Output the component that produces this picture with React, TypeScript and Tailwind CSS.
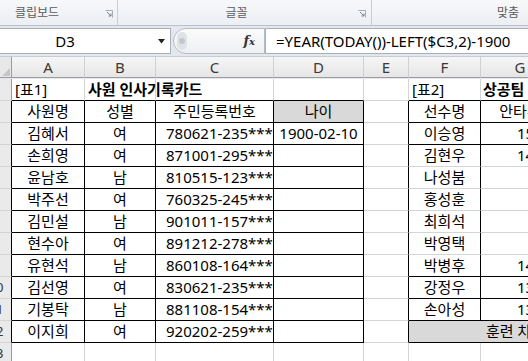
import React from 'react';

const FONT = "font-['Noto_Sans','Noto_Sans_CJK_KR',sans-serif]";

const names = ['김혜서', '손희영', '윤남호', '박주선', '김민설', '현수아', '유현석', '김선영', '기봉탁', '이지희'];
const sexes = ['여', '여', '남', '여', '남', '여', '남', '여', '남', '여'];
const ids = [
  '780621-235****',
  '871001-295****',
  '810515-123****',
  '760325-245****',
  '901011-157****',
  '891212-278****',
  '860108-164****',
  '830621-235****',
  '881108-154****',
  '920202-259****',
];
const players = ['이승영', '김현우', '나성붐', '홍성훈', '최희석', '박영택', '박병후', '강정우', '손아성'];
const hits = ['152', '148', '', '', '', '', '143', '139', '131'];

type CellProps = {
  children?: React.ReactNode;
  align?: 'left' | 'center' | 'right';
  rb?: boolean;
  bb?: boolean;
  fill?: boolean;
  className?: string;
};

function Cell({ children, align = 'center', rb, bb, fill, className = '' }: CellProps) {
  const justify = align === 'left' ? 'justify-start' : align === 'right' ? 'justify-end' : 'justify-center';
  return (
    <div
      className={`flex items-center overflow-hidden whitespace-nowrap border-r border-b text-[15px] text-black ${justify} ${
        rb ? 'border-r-black' : 'border-r-[#d4d4d4]'
      } ${bb ? 'border-b-black' : 'border-b-[#d4d4d4]'} ${fill ? 'bg-[#d9d9d9]' : 'bg-white'} ${className}`}
    >
      {children}
    </div>
  );
}

function RowHead({ n, dark }: { n: number; dark?: boolean }) {
  return (
    <div
      className={`flex justify-end overflow-hidden border-b border-b-[#d4d4d4] border-r bg-[#eaeaea] ${
        dark ? 'border-r-black' : 'border-r-[#9c9c9c]'
      }`}
    >
      <div className="flex w-[30px] shrink-0 items-center justify-center text-[13px] text-[#333]">{n}</div>
    </div>
  );
}

function DialogLauncher({ className = '' }: { className?: string }) {
  return (
    <svg width="8" height="8" viewBox="0 0 8 8" className={className}>
      <path d="M0.5 0.5H7.5V7.5" fill="none" stroke="#a6acb5" strokeWidth="1" />
      <path d="M2 2L6 6M6 3.5V6H3.5" fill="none" stroke="#7d838c" strokeWidth="1" />
    </svg>
  );
}

function Ribbon() {
  return (
    <div className="flex h-[26px] border-b border-b-[#b9c0ca] bg-gradient-to-b from-[#f7f8fa] to-[#eceff3] text-[12px] text-[#5c5c5c]">
      <div className="relative flex w-[118px] items-end border-r border-r-[#c9ced6] pb-[3px] pl-[15px]">
        <span>클립보드</span>
        <DialogLauncher className="absolute right-[4px] bottom-[7px]" />
      </div>
      <div className="relative flex w-[254px] items-end justify-center border-r border-r-[#c9ced6] pb-[3px] pr-[16px]">
        <span>글꼴</span>
        <DialogLauncher className="absolute right-[5px] bottom-[7px]" />
      </div>
      <div className="flex flex-1 items-end justify-end pb-[3px] pr-[9px]">
        <span>맞춤</span>
      </div>
    </div>
  );
}

function FormulaBar() {
  return (
    <div className="flex h-[30px] items-center bg-[#e4e8ee] py-[1px]">
      <div className="flex h-[26px] w-[171px] items-center border-y border-r border-[#a8afb9] bg-white">
        <span className="w-[130px] text-center text-[15px] text-black">D3</span>
        <svg width="8" height="5" viewBox="0 0 8 5" className="ml-auto mr-[4px]">
          <path d="M0 0H7L3.5 4.5Z" fill="#222" />
        </svg>
      </div>
      <div className="ml-[2px] flex h-[26px] w-[92px] items-center rounded-l-[13px] border border-[#b5bcc6] bg-gradient-to-b from-[#fbfbfc] to-[#eef0f3]">
        <div className="ml-[3px] flex h-[18px] w-[10px] items-center justify-center rounded-full bg-[#dfe2e6]">
          <div className="h-[6px] w-[6px] rounded-full bg-[#c3c8cf]" />
        </div>
        <span className="ml-auto mr-[9px] font-['DejaVu_Serif',serif] text-[13px] font-bold italic text-[#333]">
          f<span className="text-[10px]">x</span>
        </span>
      </div>
      <div className="flex h-[26px] flex-1 items-center border-y border-l border-[#a8afb9] bg-white pl-[10px] text-[15px] text-black">
        =YEAR(TODAY())-LEFT($C3,2)-1900
      </div>
    </div>
  );
}

export default function App() {
  const cols = ['A', 'B', 'C', 'D', 'E', 'F', 'G'];

  return (
    <div className={`h-[361px] w-[528px] overflow-hidden bg-[#e4e8ee] ${FONT}`}>
      <Ribbon />
      <FormulaBar />
      <div className="w-[560px] border-t border-t-[#c6ccd4]">
        <div className="grid grid-cols-[12px_73px_71px_118px_90px_45px_72px_79px] auto-rows-[22px]">
          {/* column header */}
          <div className="relative h-[21px] border-r border-b border-r-[#9c9c9c] border-b-[#9c9c9c] bg-[#e8e8e8]">
            <svg width="8" height="8" viewBox="0 0 8 8" className="absolute right-[1px] bottom-[1px]">
              <path d="M8 0V8H0Z" fill="#c5c5c5" />
            </svg>
          </div>
          {cols.map((c) => (
            <div
              key={c}
              className="flex h-[21px] items-center justify-center border-r border-b border-r-[#d0d0d0] border-b-[#9c9c9c] bg-gradient-to-b from-[#f6f6f6] to-[#e6e6e6] text-[15px] text-[#3a3a3a]"
            >
              {c}
            </div>
          ))}

          {/* row 1 */}
          <RowHead n={1} />
          <Cell align="left" bb className="pl-[3px] text-[12px]">[표1]</Cell>
          <Cell align="left" bb className="overflow-visible pl-[3px] font-bold">
            <span className="relative z-10">사원 인사기록카드</span>
          </Cell>
          <Cell bb />
          <Cell bb />
          <Cell />
          <Cell align="left" bb className="pl-[3px] text-[12px]">[표2]</Cell>
          <Cell align="left" bb className="pl-[2px] font-bold">상공팀 타격 기록</Cell>

          {/* row 2 */}
          <RowHead n={2} dark />
          <Cell rb bb>사원명</Cell>
          <Cell rb bb>성별</Cell>
          <Cell rb bb>주민등록번호</Cell>
          <Cell rb bb fill>나이</Cell>
          <Cell rb />
          <Cell rb bb>선수명</Cell>
          <Cell bb>안타수</Cell>

          {names.map((name, i) => {
            const r = i + 3;
            // F~G 4~8행 사이 가로선은 회색
            const fBlack = r <= 3 || r >= 9;
            return (
              <React.Fragment key={name}>
                <RowHead n={r} dark />
                <Cell rb bb>{name}</Cell>
                <Cell rb bb>{sexes[i]}</Cell>
                <Cell rb bb align="left" className="pl-[10px]">{ids[i]}</Cell>
                <Cell rb bb>{r === 3 ? '1900-02-10' : ''}</Cell>
                <Cell rb />
                {r <= 11 ? (
                  <>
                    <Cell rb bb={fBlack}>{players[i]}</Cell>
                    <Cell bb={fBlack} align="left" className="pl-[36px]">{hits[i]}</Cell>
                  </>
                ) : (
                  <Cell bb fill align="left" className="col-span-2 pl-[77px]">훈련 차수</Cell>
                )}
              </React.Fragment>
            );
          })}

          {/* row 13 */}
          <RowHead n={13} />
          <Cell />
          <Cell />
          <Cell />
          <Cell />
          <Cell />
          <Cell />
          <Cell />
        </div>
      </div>
    </div>
  );
}
